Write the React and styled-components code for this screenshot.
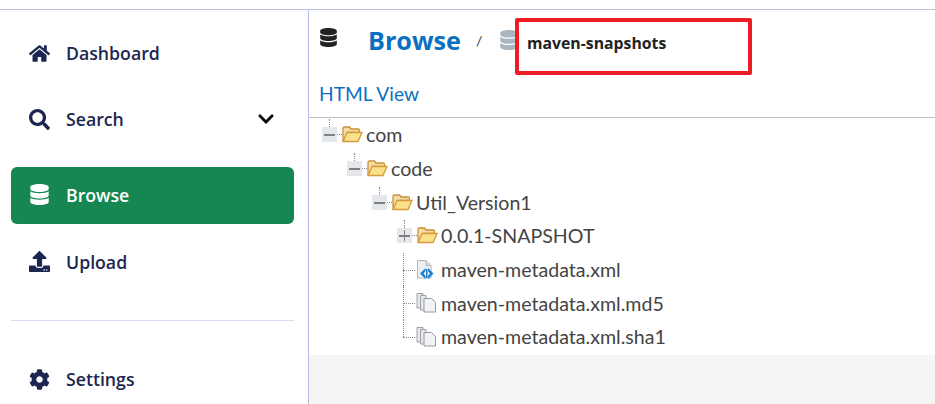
import styled, { createGlobalStyle } from "styled-components";
import { FaHome, FaSearch, FaDatabase, FaUpload, FaCog, FaChevronDown } from "react-icons/fa";

const Global = createGlobalStyle`
  html, body { margin: 0; padding: 0; background: #fff; overflow: hidden; }
`;

const Page = styled.div`
  position: relative;
  width: 935px;
  height: 395px;
  box-sizing: border-box;
  margin-top: 9px;
  border-top: 1px solid #bcc3dc;
  display: flex;
  overflow: hidden;
`;

const Sidebar = styled.nav`
  width: 309px;
  flex: none;
  box-sizing: border-box;
  border-right: 1px solid #b4bde0;
  padding: 0 14px 0 11px;
  font-family: "Open Sans", "Noto Sans", sans-serif;
`;

const Item = styled.div`
  height: ${(p) => p.$h}px;
  margin-bottom: ${(p) => p.$mb || 0}px;
  box-sizing: border-box;
  padding: 0 19px 2px 18px;
  display: flex;
  align-items: center;
  border-radius: 6px;
  background: ${(p) => (p.$active ? "#168653" : "transparent")};
  color: ${(p) => (p.$active ? "#fff" : "#1c2650")};
  font-size: 17.7px;
  font-weight: 600;
`;

const ItemIcon = styled.span`
  width: 37px;
  flex: none;
  display: flex;
  align-items: center;
  font-size: 21px;
`;

const ItemLabel = styled.span`
  flex: 1;
`;

const Caret = styled(FaChevronDown)`
  color: #0a0a0a;
  font-size: 18px;
`;

const Rule = styled.div`
  height: 1px;
  background: #d8def0;
  margin: 0 0 29px;
`;

const Main = styled.main`
  flex: 1;
  min-width: 0;
  font-family: Lato, "Open Sans", sans-serif;
`;

const Header = styled.header`
  height: 108px;
  box-sizing: border-box;
  border-bottom: 1px solid #bfc1c9;
  padding: 14px 0 0 10px;
`;

const TitleRow = styled.div`
  display: flex;
  align-items: center;
  height: 32px;
`;

const TitleIcon = styled(FaDatabase)`
  color: #222;
  font-size: 19px;
  margin-right: 30px;
  margin-top: -5px;
`;

const Title = styled.span`
  color: #0b6fc2;
  font-size: 25.2px;
  font-weight: 700;
  font-family: "Open Sans", sans-serif;
  margin-right: 15px;
`;

const Slash = styled.span`
  color: #333;
  font-size: 14px;
  margin-right: 17px;
`;

const RepoIcon = styled(FaDatabase)`
  color: #a9b6c2;
  font-size: 20px;
`;

const HtmlLink = styled.a`
  display: block;
  margin-top: 26px;
  color: #0b6fc2;
  font-size: 19.2px;
  line-height: 24px;
`;

const Tree = styled.div`
  height: 237px;
  box-sizing: border-box;
  background: #fff;
`;

const Row = styled.div`
  height: 33.7px;
  display: flex;
  align-items: center;
  padding-left: ${(p) => p.$indent}px;
  color: #444;
  font-size: 19.6px;
`;

const Footer = styled.div`
  height: 60px;
  background: #f5f5f5;
`;

const Connector = styled.span`
  width: ${(p) => p.$w}px;
  height: 100%;
  flex: none;
  position: relative;
  &::before {
    content: "";
    position: absolute;
    left: ${(p) => p.$stem}px;
    top: 0;
    height: ${(p) => (p.$long ? 100 : 50)}%;
    border-left: 1px dotted #888;
  }
  &::after {
    content: "";
    position: absolute;
    left: ${(p) => p.$stem}px;
    right: 1px;
    top: 50%;
    border-top: 1px dotted #888;
  }
`;

const ToggleWrap = styled.span`
  position: relative;
  flex: none;
  width: 20px;
  height: 15px;
  display: flex;
  align-items: center;
  &::before {
    content: "";
    position: absolute;
    left: 7px;
    bottom: 15px;
    height: 8px;
    border-left: 1px dotted #888;
  }
  &::after {
    content: "";
    position: absolute;
    left: 15px;
    right: 0;
    top: 7px;
    border-top: 1px dotted #888;
  }
`;

const Toggle = styled.span`
  width: 15px;
  height: 15px;
  flex: none;
  background: #e4e7eb;
  position: relative;
  &::before {
    content: "";
    position: absolute;
    left: 2px;
    right: 2px;
    top: 7px;
    height: 2px;
    background: #808080;
  }
  &::after {
    content: "";
    display: ${(p) => (p.$open ? "none" : "block")};
    position: absolute;
    top: 2px;
    bottom: 2px;
    left: 7px;
    width: 1px;
    background: #808080;
  }
`;

const Name = styled.span`
  margin-left: ${(p) => p.$gap}px;
`;

const Highlight = styled.div`
  position: absolute;
  left: 515px;
  top: 8px;
  width: 237px;
  height: 57px;
  box-sizing: border-box;
  background: #fff;
  border: 4px solid #ee1c25;
  border-radius: 2px;
`;

const HighlightLabel = styled.span`
  position: absolute;
  left: 8px;
  top: 10px;
  color: #222;
  font-size: 15.8px;
  font-weight: 700;
  font-family: "Open Sans", sans-serif;
`;

const FolderIcon = () => (
  <svg width="21" height="17" viewBox="0 0 21 17">
    <path d="M1 15V2.5Q1 1 2.5 1H7.5L9 3H16Q17.5 3 17.5 4.5V6.5H6L3 15Z" fill="#f5dca6" stroke="#c98e35" strokeWidth="1.3" />
    <path d="M1.2 15.5L5 6.5H20L16 15.5Z" fill="#fbe28a" stroke="#d49a3f" strokeWidth="1.3" />
  </svg>
);

const XmlIcon = () => (
  <svg width="21" height="20" viewBox="0 0 21 20">
    <path d="M1.5 .5H10L15 5.5V18H1.5Z" fill="#eef0f3" stroke="#b0b5bc" />
    <path d="M10 .5V5.5H15" fill="#d8dce1" stroke="#b0b5bc" />
    <path d="M9.5 8L4 13.5L9.5 19V16L7.5 13.5L9.5 11ZM12 8L17.5 13.5L12 19V16L14 13.5L12 11Z" fill="#1d7fc9" />
    <path d="M10 9H11.5V18H10Z" fill="#1d7fc9" />
  </svg>
);

const CopyIcon = () => (
  <svg width="21" height="20" viewBox="0 0 21 20">
    <path d="M1 .5H7V15H1Z" fill="#e6e8ea" stroke="#9ea2a8" />
    <path d="M4.5 2.5H10V17H4.5Z" fill="#e6e8ea" stroke="#9ea2a8" />
    <path d="M8 5.5H15.5L19.5 9.5V19H8Z" fill="#f2f3f4" stroke="#969aa0" />
  </svg>
);

const App = () => (
  <>
    <Global />
    <Page>
      <Sidebar>
        <Item $h={88}>
          <ItemIcon><FaHome /></ItemIcon>
          <ItemLabel>Dashboard</ItemLabel>
        </Item>
        <Item $h={44} $mb={25}>
          <ItemIcon><FaSearch /></ItemIcon>
          <ItemLabel>Search</ItemLabel>
          <Caret />
        </Item>
        <Item $h={57} $active $mb={10}>
          <ItemIcon><FaDatabase /></ItemIcon>
          <ItemLabel>Browse</ItemLabel>
        </Item>
        <Item $h={57} $mb={29}>
          <ItemIcon><FaUpload /></ItemIcon>
          <ItemLabel>Upload</ItemLabel>
        </Item>
        <Rule />
        <Item $h={60}>
          <ItemIcon><FaCog /></ItemIcon>
          <ItemLabel>Settings</ItemLabel>
        </Item>
      </Sidebar>
      <Main>
        <Header>
          <TitleRow>
            <TitleIcon />
            <Title>Browse</Title>
            <Slash>/</Slash>
            <RepoIcon />
          </TitleRow>
          <HtmlLink>HTML View</HtmlLink>
        </Header>
        <Tree>
          <Row $indent={13}>
            <ToggleWrap><Toggle $open /></ToggleWrap>
            <FolderIcon />
            <Name $gap={3}>com</Name>
          </Row>
          <Row $indent={38}>
            <ToggleWrap><Toggle $open /></ToggleWrap>
            <FolderIcon />
            <Name $gap={3}>code</Name>
          </Row>
          <Row $indent={63}>
            <ToggleWrap><Toggle $open /></ToggleWrap>
            <FolderIcon />
            <Name $gap={3}>Util_Version1</Name>
          </Row>
          <Row $indent={88}>
            <ToggleWrap><Toggle /></ToggleWrap>
            <FolderIcon />
            <Name $gap={3}>0.0.1-SNAPSHOT</Name>
          </Row>
          <Row $indent={94}>
            <Connector $w={13} $stem={0} $long />
            <XmlIcon />
            <Name $gap={4}>maven-metadata.xml</Name>
          </Row>
          <Row $indent={94}>
            <Connector $w={13} $stem={0} $long />
            <CopyIcon />
            <Name $gap={4}>maven-metadata.xml.md5</Name>
          </Row>
          <Row $indent={94}>
            <Connector $w={13} $stem={0} />
            <CopyIcon />
            <Name $gap={4}>maven-metadata.xml.sha1</Name>
          </Row>
        </Tree>
        <Footer />
      </Main>
      <Highlight>
        <HighlightLabel>maven-snapshots</HighlightLabel>
      </Highlight>
    </Page>
  </>
);

export default App;
